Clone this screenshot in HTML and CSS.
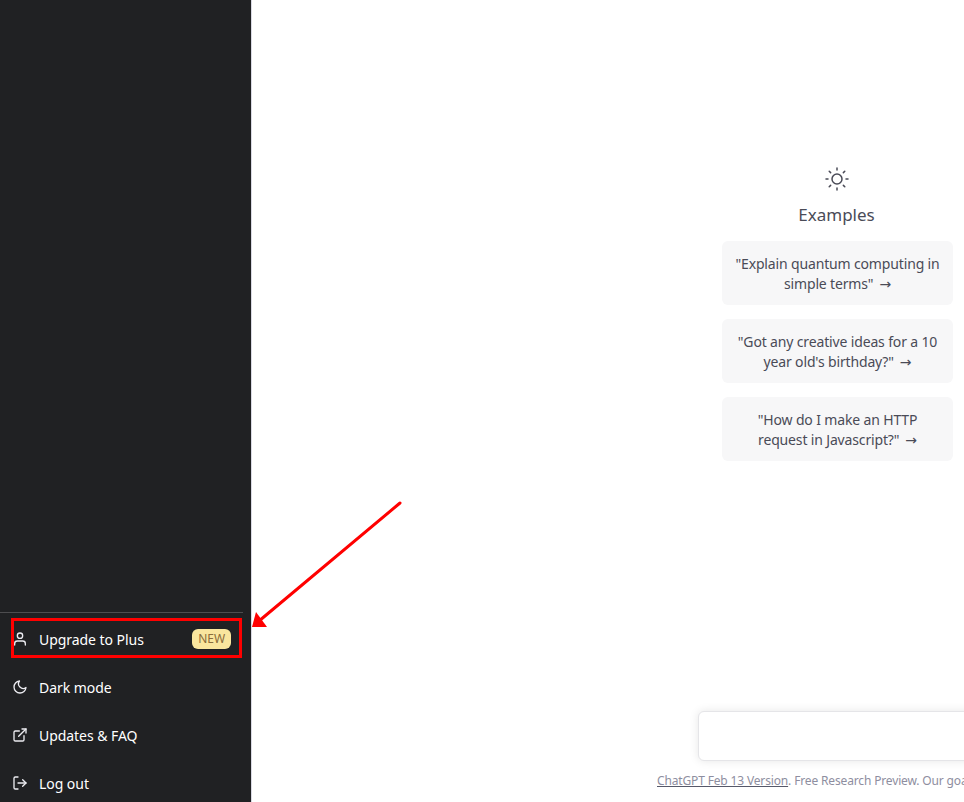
FILE: index.html
```html
<!doctype html>
<html>
  <head>
    <link rel="stylesheet" href="styles.css">
  </head>
  <body>
    <div id="app">
      <nav class="sidebar">
        <div class="menu">
          <a class="menu-item">
            <svg class="menu-icon" viewBox="0 0 24 24"><path d="M20 21v-2a4 4 0 0 0-4-4H8a4 4 0 0 0-4 4v2"/><circle cx="12" cy="7" r="4"/></svg>
            <span class="menu-text">Upgrade to Plus</span>
            <span class="badge">NEW</span>
          </a>
          <a class="menu-item">
            <svg class="menu-icon" viewBox="0 0 24 24"><path d="M21 12.79A9 9 0 1 1 11.21 3 7 7 0 0 0 21 12.79z"/></svg>
            <span class="menu-text">Dark mode</span>
          </a>
          <a class="menu-item">
            <svg class="menu-icon" viewBox="0 0 24 24"><path d="M18 13v6a2 2 0 0 1-2 2H5a2 2 0 0 1-2-2V8a2 2 0 0 1 2-2h6"/><polyline points="15 3 21 3 21 9"/><line x1="10" y1="14" x2="21" y2="3"/></svg>
            <span class="menu-text">Updates &amp; FAQ</span>
          </a>
          <a class="menu-item">
            <svg class="menu-icon" viewBox="0 0 24 24"><path d="M9 21H5a2 2 0 0 1-2-2V5a2 2 0 0 1 2-2h4"/><polyline points="16 17 21 12 16 7"/><line x1="21" y1="12" x2="9" y2="12"/></svg>
            <span class="menu-text">Log out</span>
          </a>
        </div>
      </nav>
      <main class="main">
        <section class="examples">
          <svg class="sun" viewBox="0 0 24 24"><circle cx="12" cy="12" r="5"/><line x1="12" y1="1" x2="12" y2="3"/><line x1="12" y1="21" x2="12" y2="23"/><line x1="4.22" y1="4.22" x2="5.64" y2="5.64"/><line x1="18.36" y1="18.36" x2="19.78" y2="19.78"/><line x1="1" y1="12" x2="3" y2="12"/><line x1="21" y1="12" x2="23" y2="12"/><line x1="4.22" y1="19.78" x2="5.64" y2="18.36"/><line x1="18.36" y1="5.64" x2="19.78" y2="4.22"/></svg>
          <h2 class="examples-title">Examples</h2>
          <button class="example">
            <span class="example-line">"Explain quantum computing in</span>
            <span class="example-line">simple terms"<span class="arrow">→</span></span>
          </button>
          <button class="example">
            <span class="example-line">"Got any creative ideas for a 10</span>
            <span class="example-line">year old's birthday?"<span class="arrow">→</span></span>
          </button>
          <button class="example">
            <span class="example-line">"How do I make an HTTP</span>
            <span class="example-line">request in Javascript?"<span class="arrow">→</span></span>
          </button>
        </section>
        <div class="bottom">
          <div class="prompt"></div>
          <p class="footer"><a class="footer-link">ChatGPT Feb 13 Version</a>. Free Research Preview. Our goal is to make AI systems more natural and safe to interact with.</p>
        </div>
      </main>
    </div>

    <!-- red marks drawn over the screenshot -->
    <div class="mark-box"></div>
    <svg class="mark-arrow" viewBox="0 0 964 802">
      <line x1="400" y1="503" x2="259" y2="621"/>
      <polygon points="252,627 267,627 256,612"/>
    </svg>
  </body>
</html>
```
FILE: styles.css
```css
body {
  margin: 0;
  overflow: hidden;
  font-family: "Noto Sans", "Open Sans", sans-serif;
}

#app {
  display: flex;
  width: 100vw;
  height: 100vh;
  background: #FFFFFF;
}

.sidebar {
  flex: none;
  width: 251px;
  padding-top: 612px;
  box-sizing: content-box;
  overflow: hidden;
  border-right: 1px solid #D9D9E3;
  background: #202123;
}

.menu {
  width: 243px;
  padding-top: 2px;
  border-top: 1px solid #4D4D4F;
}

.menu-item {
  display: flex;
  align-items: center;
  gap: 11px;
  height: 48px;
  padding: 0 12px;
  box-sizing: border-box;
  color: #FFFFFF;
  font-size: 14px;
  letter-spacing: -0.05px;
}

.menu-icon {
  flex: none;
  width: 16px;
  height: 16px;
  fill: none;
  stroke: #ECECF1;
  stroke-width: 2;
  stroke-linecap: round;
  stroke-linejoin: round;
}

.menu-text {
  flex: 1;
}

.badge {
  padding: 1px 6px;
  border-radius: 6px;
  background: #FAE69E;
  color: #8A6D3B;
  font-size: 12px;
  line-height: 18px;
}

.main {
  flex: 1;
  min-width: 0;
  position: relative;
  overflow: hidden;
}

.examples {
  display: flex;
  flex-direction: column;
  align-items: center;
  width: 231px;
  margin-left: 470px;
  padding-top: 167px;
}

.sun {
  width: 24px;
  height: 24px;
  margin-right: 2px;
  fill: none;
  stroke: #4A4B57;
  stroke-width: 1.5;
  stroke-linecap: round;
  stroke-linejoin: round;
}

.examples-title {
  margin: 10px 2px 12px 0;
  color: #4A4B57;
  font-size: 17px;
  font-weight: 400;
  line-height: 28px;
}

.example {
  width: 100%;
  height: 64px;
  margin-bottom: 14px;
  padding: 13px 10px 11px;
  border: 0;
  border-radius: 6px;
  background: #F7F7F8;
  color: #4A4B57;
  font: inherit;
  font-size: 14px;
  line-height: 20px;
  letter-spacing: -0.15px;
  text-align: center;
}

.example-line {
  display: block;
}

.arrow {
  margin-left: 6px;
  font-family: "DejaVu Sans", sans-serif;
}

.bottom {
  position: absolute;
  left: 405px;
  bottom: 0;
  width: 900px;
  white-space: nowrap;
}

.prompt {
  height: 48px;
  margin: 0 0 0 41px;
  border: 1px solid #E5E5E8;
  border-radius: 6px;
  background: #FFFFFF;
  box-shadow: 0 0 10px rgba(0, 0, 0, 0.1);
}

.footer {
  margin: 11px 0 12px;
  color: #8E8EA0;
  font-size: 12px;
  line-height: 18px;
  letter-spacing: -0.15px;
}

.footer-link {
  text-decoration: underline;
  text-decoration-color: #565869;
}

.mark-box {
  position: absolute;
  left: 11px;
  top: 618px;
  width: 225px;
  height: 34px;
  border: 3px solid #FF0000;
}

.mark-arrow {
  position: absolute;
  left: 0;
  top: 0;
  width: 964px;
  height: 802px;
  pointer-events: none;
}

.mark-arrow line {
  stroke: #FF0000;
  stroke-width: 3;
  stroke-linecap: round;
}

.mark-arrow polygon {
  fill: #FF0000;
}
```
